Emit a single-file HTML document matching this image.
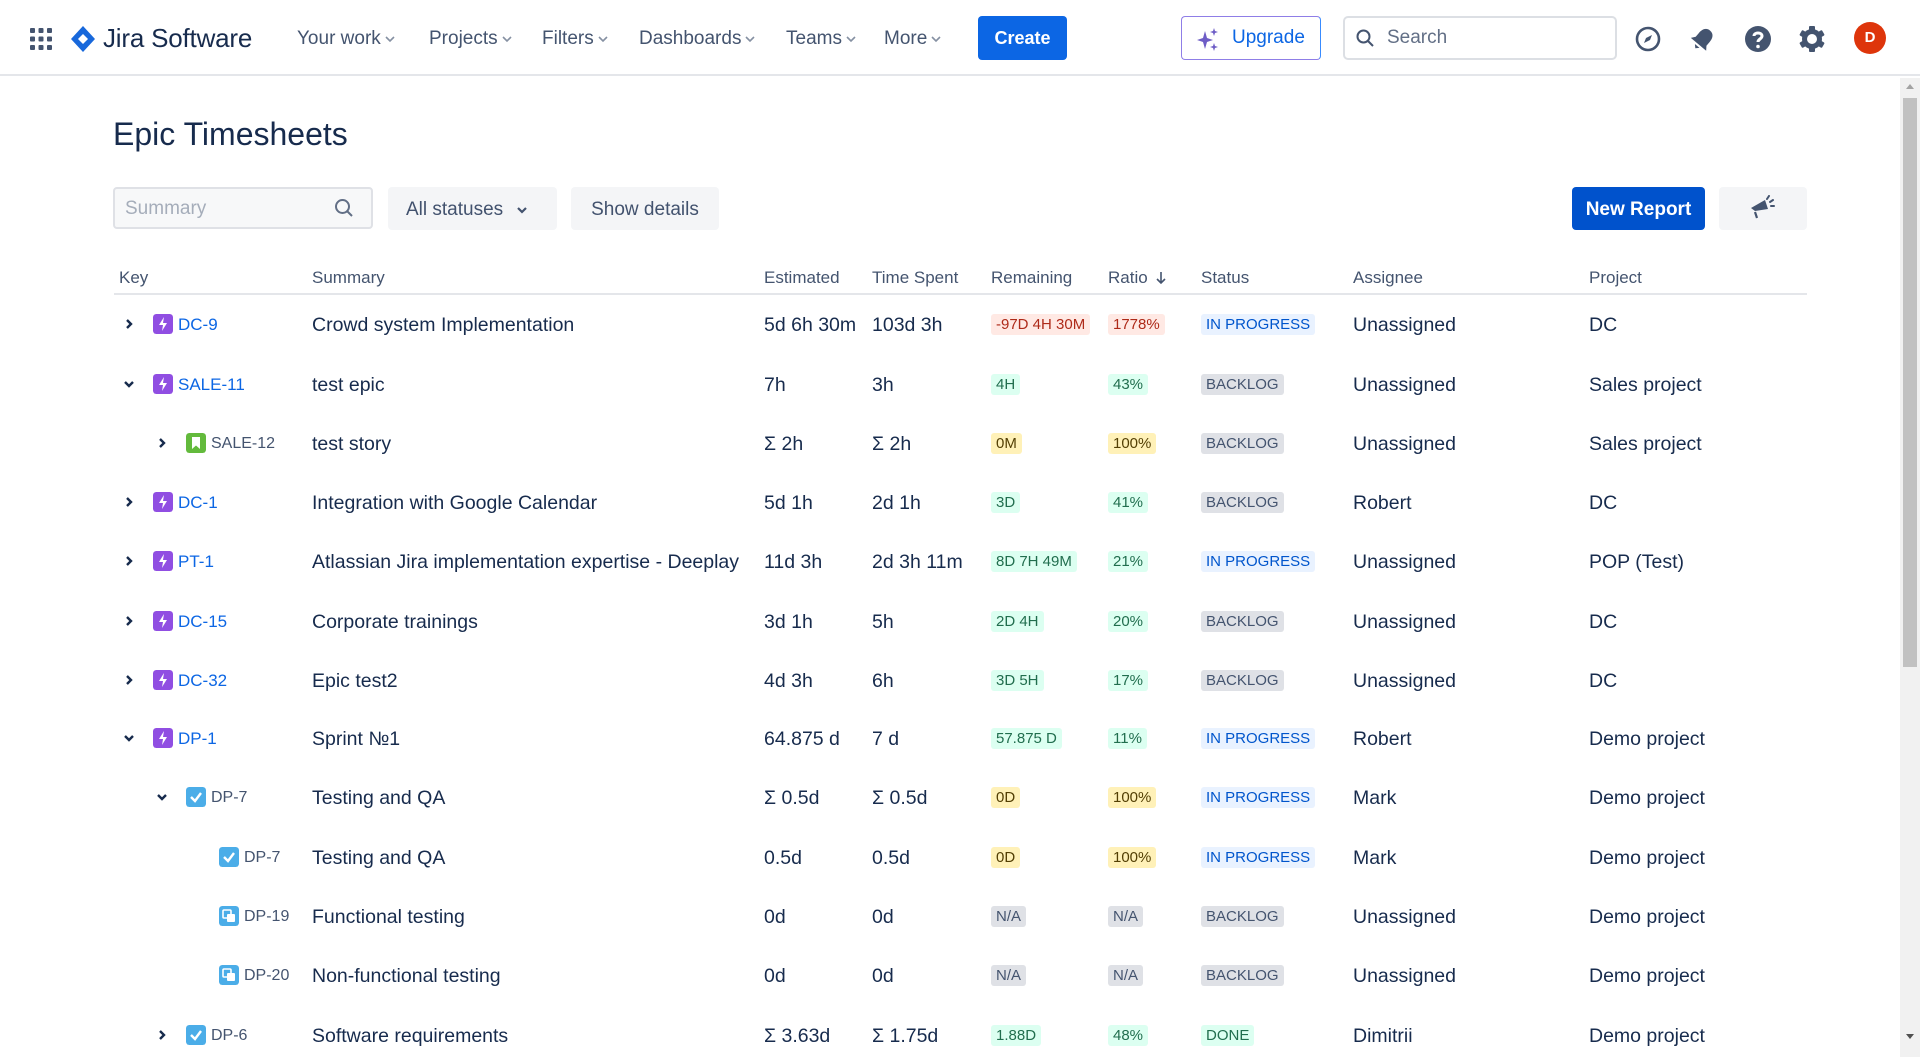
<!DOCTYPE html>
<html><head><meta charset="utf-8"><style>
*{box-sizing:border-box;margin:0;padding:0}
body{width:1920px;height:1057px;overflow:hidden;background:#fff;font-family:"Liberation Sans",Arial,sans-serif;color:#172b4d;position:relative}
.a{position:absolute}
.nav{position:absolute;left:0;top:0;width:1920px;height:76px;border-bottom:2px solid #e4e6ea}
.ni{position:absolute;top:27px;font-size:19px;color:#44546f;line-height:24px}
.ni svg{margin-left:4px;vertical-align:middle}
.row{position:absolute;left:0;width:1900px;height:40px;font-size:19.5px;line-height:40px;color:#172b4d}
.row>*{position:absolute;top:1px}
.ic{top:10px!important;width:20px;height:20px;border-radius:3px}
.k{font-size:17px}
.kd{font-size:16px;color:#44546f}
.b{display:inline-block;line-height:21px;height:21px;padding:0 5px;border-radius:3px;font-size:15px;vertical-align:middle;margin-top:-2px;font-style:normal}
.red{background:#ffe9e4;color:#ae2a19}.grn{background:#dcfff1;color:#216e4e}.yel{background:#fff1b8;color:#533f04}.gry{background:#dfe1e6;color:#44546f}.blu{background:#e9f2ff;color:#0055cc}
.th{position:absolute;top:268px;font-size:17px;color:#44546f}
</style></head><body>
<div class="nav">
<svg class="a" style="left:30px;top:28px" width="22" height="22" viewBox="0 0 22 22" fill="#44546f"><rect x="0" y="0" width="5" height="5" rx="1"/><rect x="8.5" y="0" width="5" height="5" rx="1"/><rect x="17" y="0" width="5" height="5" rx="1"/><rect x="0" y="8.5" width="5" height="5" rx="1"/><rect x="8.5" y="8.5" width="5" height="5" rx="1"/><rect x="17" y="8.5" width="5" height="5" rx="1"/><rect x="0" y="17" width="5" height="5" rx="1"/><rect x="8.5" y="17" width="5" height="5" rx="1"/><rect x="17" y="17" width="5" height="5" rx="1"/></svg>
<svg class="a" style="left:71px;top:26px" width="24" height="26" viewBox="0 0 24 26"><path d="M12 0 L24 13 L12 26 L0 13 Z" fill="#1868db"/><path d="M12 8 L17 13 L12 18 L7 13 Z" fill="#fff"/></svg>
<div class="a" style="left:103px;top:23px;font-size:26px;color:#172b4d;letter-spacing:-0.2px">Jira Software</div>
<div class="ni" style="left:297px">Your work<svg width="10" height="8" viewBox="0 0 10 8"><path d="M1 2 L5 6 L9 2" stroke="#8590a2" stroke-width="1.6" fill="none"/></svg></div>
<div class="ni" style="left:429px">Projects<svg width="10" height="8" viewBox="0 0 10 8"><path d="M1 2 L5 6 L9 2" stroke="#8590a2" stroke-width="1.6" fill="none"/></svg></div>
<div class="ni" style="left:542px">Filters<svg width="10" height="8" viewBox="0 0 10 8"><path d="M1 2 L5 6 L9 2" stroke="#8590a2" stroke-width="1.6" fill="none"/></svg></div>
<div class="ni" style="left:639px">Dashboards<svg width="10" height="8" viewBox="0 0 10 8"><path d="M1 2 L5 6 L9 2" stroke="#8590a2" stroke-width="1.6" fill="none"/></svg></div>
<div class="ni" style="left:786px">Teams<svg width="10" height="8" viewBox="0 0 10 8"><path d="M1 2 L5 6 L9 2" stroke="#8590a2" stroke-width="1.6" fill="none"/></svg></div>
<div class="ni" style="left:884px">More<svg width="10" height="8" viewBox="0 0 10 8"><path d="M1 2 L5 6 L9 2" stroke="#8590a2" stroke-width="1.6" fill="none"/></svg></div>
<div class="a" style="left:978px;top:16px;width:89px;height:44px;background:#0c66e4;border-radius:4px;color:#fff;font-size:18px;font-weight:bold;text-align:center;line-height:44px">Create</div>
<div class="a" style="left:1181px;top:16px;width:140px;height:44px;border:1.5px solid #8f7ee7;border-right-color:#388bff;border-radius:4px;color:#0c66e4;font-size:19px;line-height:41px;padding-left:50px">Upgrade</div>
<svg class="a" style="left:1197px;top:28px" width="22" height="24" viewBox="0 0 22 24" fill="#6e5dc6"><path d="M8 3 L10 10 L16 12 L10 14 L8 21 L6 14 L0 12 L6 10 Z"/><path d="M17 0 L18 3 L21 4 L18 5 L17 8 L16 5 L13 4 L16 3Z"/><path d="M17 15 L18 18 L21 19 L18 20 L17 23 L16 20 L13 19 L16 18Z"/></svg>
<div class="a" style="left:1343px;top:16px;width:274px;height:44px;border:2px solid #dcdfe4;border-radius:5px;color:#626f86;font-size:19px;line-height:40px;padding-left:42px">Search</div>
<svg class="a" style="left:1356px;top:29px" width="18" height="18" viewBox="0 0 18 18"><circle cx="7.5" cy="7.5" r="6" stroke="#44546f" stroke-width="2" fill="none"/><path d="M12 12 L17 17" stroke="#44546f" stroke-width="2"/></svg>
<svg class="a" style="left:1635px;top:26px" width="26" height="26" viewBox="0 0 26 26"><circle cx="13" cy="13" r="11" stroke="#44546f" stroke-width="2.6" fill="none"/><path d="M17 9 L11 12 L9 17 L15 14 Z" fill="#44546f"/></svg>
<svg class="a" style="left:1690px;top:25px" width="26" height="28" viewBox="0 0 26 28"><g transform="rotate(40 13 14)"><path d="M13 3 C18 3 20 7 20 12 L20 17 L23 21 L3 21 L6 17 L6 12 C6 7 8 3 13 3 Z" fill="#44546f"/><path d="M10 23 L16 23 L13 26 Z" fill="#44546f"/></g></svg>
<svg class="a" style="left:1744px;top:25px" width="28" height="28" viewBox="0 0 28 28"><circle cx="14" cy="14" r="13" fill="#44546f"/><path d="M10 11 C10 7 18 7 18 11 C18 14 14 14 14 17" stroke="#fff" stroke-width="3" fill="none"/><circle cx="14" cy="21.5" r="1.8" fill="#fff"/></svg>
<svg class="a" style="left:1798px;top:25px" width="28" height="28" viewBox="0 0 28 28"><g fill="#44546f"><rect x="11" y="1" width="6" height="26" rx="1"/><rect x="11" y="1" width="6" height="26" rx="1" transform="rotate(60 14 14)"/><rect x="11" y="1" width="6" height="26" rx="1" transform="rotate(120 14 14)"/><circle cx="14" cy="14" r="10"/></g><circle cx="14" cy="14" r="5" fill="#fff"/></svg>
<div class="a" style="left:1854px;top:22px;width:32px;height:32px;border-radius:50%;background:#de350b;color:#fff;font-size:15px;font-weight:bold;text-align:center;line-height:32px">D</div>
</div>
<div class="a" style="left:1900px;top:78px;width:20px;height:979px;background:#f1f1f1"></div>
<div class="a" style="left:1903px;top:98px;width:14px;height:569px;background:#c1c1c1"></div>
<div class="a" style="left:1906px;top:84px;width:0;height:0;border:4px solid transparent;border-bottom:5px solid #a3a3a3;border-top:0"></div>
<div class="a" style="left:1906px;top:1034px;width:0;height:0;border:4px solid transparent;border-top:5px solid #505050;border-bottom:0"></div>

<div class="a" style="left:113px;top:116px;font-size:32px;color:#172b4d">Epic Timesheets</div>
<div class="a" style="left:113px;top:187px;width:260px;height:42px;border:2px solid #dfe1e6;border-radius:4px;background:#f7f8f9;color:#a5adba;font-size:19px;line-height:40px;padding-left:10px">Summary</div>
<svg class="a" style="left:334px;top:198px" width="20" height="20" viewBox="0 0 20 20"><circle cx="8.5" cy="8.5" r="6.5" stroke="#626f86" stroke-width="2" fill="none"/><path d="M13 13 L18 18" stroke="#626f86" stroke-width="2"/></svg>
<div class="a" style="left:388px;top:187px;width:169px;height:43px;background:#f4f5f7;border-radius:4px;font-size:19px;color:#42526e;line-height:45px;padding-left:18px">All statuses <svg width="12" height="10" viewBox="0 0 12 10" style="margin-left:8px"><path d="M2 3 L6 7 L10 3" stroke="#42526e" stroke-width="2.2" fill="none"/></svg></div>
<div class="a" style="left:571px;top:187px;width:148px;height:43px;background:#f4f5f7;border-radius:4px;font-size:19px;color:#42526e;line-height:45px;text-align:center">Show details</div>
<div class="a" style="left:1572px;top:187px;width:133px;height:43px;background:#0052cc;border-radius:4px;font-size:19px;font-weight:bold;color:#fff;line-height:45px;text-align:center">New Report</div>
<div class="a" style="left:1719px;top:187px;width:88px;height:43px;background:#f4f5f7;border-radius:4px"></div>
<svg class="a" style="left:1749px;top:195px" width="28" height="26" viewBox="0 0 28 26"><path d="M2 13 L16 5 L19 14 L6 16 Z" fill="#44546f"/><path d="M6 17 L8 23" stroke="#44546f" stroke-width="2.2"/><path d="M18 4 L20 1 M21 7 L24 5 M22 11 L25 11" stroke="#44546f" stroke-width="2" stroke-linecap="round"/></svg>

<div class="th" style="left:119px">Key</div>
<div class="th" style="left:312px">Summary</div>
<div class="th" style="left:764px">Estimated</div>
<div class="th" style="left:872px">Time Spent</div>
<div class="th" style="left:991px">Remaining</div>
<div class="th" style="left:1108px">Ratio <svg width="12" height="14" viewBox="0 0 12 14" style="vertical-align:-2px;margin-left:3px"><path d="M6 1 L6 12 M2 8 L6 12 L10 8" stroke="#44546f" stroke-width="1.6" fill="none"/></svg></div>
<div class="th" style="left:1201px">Status</div>
<div class="th" style="left:1353px">Assignee</div>
<div class="th" style="left:1589px">Project</div>
<div class="a" style="left:114px;top:293px;width:1693px;height:2px;background:#e4e6ea"></div>

<svg width="0" height="0" style="position:absolute"><defs>
<g id="cr"><path d="M4 2 L8 6 L4 10" stroke="#172b4d" stroke-width="2.4" fill="none"/></g>
<g id="cd"><path d="M2 4 L6 8 L10 4" stroke="#172b4d" stroke-width="2.4" fill="none"/></g>
<g id="ep"><rect width="20" height="20" rx="3" fill="#904ee2"/><path d="M11 3 L6 11 L10 11 L9 17 L14 9 L10 9 Z" fill="#fff"/></g>
<g id="st"><rect width="20" height="20" rx="3" fill="#63ba3c"/><path d="M6 4 L14 4 L14 16 L10 12.5 L6 16 Z" fill="#fff"/></g>
<g id="tk"><rect width="20" height="20" rx="3" fill="#4bade8"/><path d="M5 10 L9 14 L15 6" stroke="#fff" stroke-width="2.4" fill="none"/></g>
<g id="sb"><rect width="20" height="20" rx="3" fill="#4bade8"/><rect x="4" y="4" width="8" height="8" rx="1" fill="none" stroke="#fff" stroke-width="1.6"/><rect x="8" y="8" width="8" height="8" rx="1" fill="#fff"/></g>
</defs></svg>

<div class="row" style="top:304px"><svg style="left:123px;top:14px" width="12" height="12"><use href="#cr"/></svg><svg class="ic" style="left:153px"><use href="#ep"/></svg><span class="k" style="left:178px;color:#0c66e4">DC-9</span><span style="left:312px">Crowd system Implementation</span><span style="left:764px">5d 6h 30m</span><span style="left:872px">103d 3h</span><span style="left:991px"><i class="b red">-97D 4H 30M</i></span><span style="left:1108px"><i class="b red">1778%</i></span><span style="left:1201px"><i class="b blu">IN PROGRESS</i></span><span style="left:1353px">Unassigned</span><span style="left:1589px">DC</span></div>

<div class="row" style="top:364px"><svg style="left:123px;top:14px" width="12" height="12"><use href="#cd"/></svg><svg class="ic" style="left:153px"><use href="#ep"/></svg><span class="k" style="left:178px;color:#0c66e4">SALE-11</span><span style="left:312px">test epic</span><span style="left:764px">7h</span><span style="left:872px">3h</span><span style="left:991px"><i class="b grn">4H</i></span><span style="left:1108px"><i class="b grn">43%</i></span><span style="left:1201px"><i class="b gry">BACKLOG</i></span><span style="left:1353px">Unassigned</span><span style="left:1589px">Sales project</span></div>

<div class="row" style="top:423px"><svg style="left:156px;top:14px" width="12" height="12"><use href="#cr"/></svg><svg class="ic" style="left:186px"><use href="#st"/></svg><span class="kd" style="left:211px">SALE-12</span><span style="left:312px">test story</span><span style="left:764px">Σ 2h</span><span style="left:872px">Σ 2h</span><span style="left:991px"><i class="b yel">0M</i></span><span style="left:1108px"><i class="b yel">100%</i></span><span style="left:1201px"><i class="b gry">BACKLOG</i></span><span style="left:1353px">Unassigned</span><span style="left:1589px">Sales project</span></div>

<div class="row" style="top:482px"><svg style="left:123px;top:14px" width="12" height="12"><use href="#cr"/></svg><svg class="ic" style="left:153px"><use href="#ep"/></svg><span class="k" style="left:178px;color:#0c66e4">DC-1</span><span style="left:312px">Integration with Google Calendar</span><span style="left:764px">5d 1h</span><span style="left:872px">2d 1h</span><span style="left:991px"><i class="b grn">3D</i></span><span style="left:1108px"><i class="b grn">41%</i></span><span style="left:1201px"><i class="b gry">BACKLOG</i></span><span style="left:1353px">Robert</span><span style="left:1589px">DC</span></div>

<div class="row" style="top:541px"><svg style="left:123px;top:14px" width="12" height="12"><use href="#cr"/></svg><svg class="ic" style="left:153px"><use href="#ep"/></svg><span class="k" style="left:178px;color:#0c66e4">PT-1</span><span style="left:312px">Atlassian Jira implementation expertise - Deeplay</span><span style="left:764px">11d 3h</span><span style="left:872px">2d 3h 11m</span><span style="left:991px"><i class="b grn">8D 7H 49M</i></span><span style="left:1108px"><i class="b grn">21%</i></span><span style="left:1201px"><i class="b blu">IN PROGRESS</i></span><span style="left:1353px">Unassigned</span><span style="left:1589px">POP (Test)</span></div>

<div class="row" style="top:601px"><svg style="left:123px;top:14px" width="12" height="12"><use href="#cr"/></svg><svg class="ic" style="left:153px"><use href="#ep"/></svg><span class="k" style="left:178px;color:#0c66e4">DC-15</span><span style="left:312px">Corporate trainings</span><span style="left:764px">3d 1h</span><span style="left:872px">5h</span><span style="left:991px"><i class="b grn">2D 4H</i></span><span style="left:1108px"><i class="b grn">20%</i></span><span style="left:1201px"><i class="b gry">BACKLOG</i></span><span style="left:1353px">Unassigned</span><span style="left:1589px">DC</span></div>

<div class="row" style="top:660px"><svg style="left:123px;top:14px" width="12" height="12"><use href="#cr"/></svg><svg class="ic" style="left:153px"><use href="#ep"/></svg><span class="k" style="left:178px;color:#0c66e4">DC-32</span><span style="left:312px">Epic test2</span><span style="left:764px">4d 3h</span><span style="left:872px">6h</span><span style="left:991px"><i class="b grn">3D 5H</i></span><span style="left:1108px"><i class="b grn">17%</i></span><span style="left:1201px"><i class="b gry">BACKLOG</i></span><span style="left:1353px">Unassigned</span><span style="left:1589px">DC</span></div>

<div class="row" style="top:718px"><svg style="left:123px;top:14px" width="12" height="12"><use href="#cd"/></svg><svg class="ic" style="left:153px"><use href="#ep"/></svg><span class="k" style="left:178px;color:#0c66e4">DP-1</span><span style="left:312px">Sprint №1</span><span style="left:764px">64.875 d</span><span style="left:872px">7 d</span><span style="left:991px"><i class="b grn">57.875 D</i></span><span style="left:1108px"><i class="b grn">11%</i></span><span style="left:1201px"><i class="b blu">IN PROGRESS</i></span><span style="left:1353px">Robert</span><span style="left:1589px">Demo project</span></div>

<div class="row" style="top:777px"><svg style="left:156px;top:14px" width="12" height="12"><use href="#cd"/></svg><svg class="ic" style="left:186px"><use href="#tk"/></svg><span class="kd" style="left:211px">DP-7</span><span style="left:312px">Testing and QA</span><span style="left:764px">Σ 0.5d</span><span style="left:872px">Σ 0.5d</span><span style="left:991px"><i class="b yel">0D</i></span><span style="left:1108px"><i class="b yel">100%</i></span><span style="left:1201px"><i class="b blu">IN PROGRESS</i></span><span style="left:1353px">Mark</span><span style="left:1589px">Demo project</span></div>

<div class="row" style="top:837px"><svg class="ic" style="left:219px"><use href="#tk"/></svg><span class="kd" style="left:244px">DP-7</span><span style="left:312px">Testing and QA</span><span style="left:764px">0.5d</span><span style="left:872px">0.5d</span><span style="left:991px"><i class="b yel">0D</i></span><span style="left:1108px"><i class="b yel">100%</i></span><span style="left:1201px"><i class="b blu">IN PROGRESS</i></span><span style="left:1353px">Mark</span><span style="left:1589px">Demo project</span></div>

<div class="row" style="top:896px"><svg class="ic" style="left:219px"><use href="#sb"/></svg><span class="kd" style="left:244px">DP-19</span><span style="left:312px">Functional testing</span><span style="left:764px">0d</span><span style="left:872px">0d</span><span style="left:991px"><i class="b gry">N/A</i></span><span style="left:1108px"><i class="b gry">N/A</i></span><span style="left:1201px"><i class="b gry">BACKLOG</i></span><span style="left:1353px">Unassigned</span><span style="left:1589px">Demo project</span></div>

<div class="row" style="top:955px"><svg class="ic" style="left:219px"><use href="#sb"/></svg><span class="kd" style="left:244px">DP-20</span><span style="left:312px">Non-functional testing</span><span style="left:764px">0d</span><span style="left:872px">0d</span><span style="left:991px"><i class="b gry">N/A</i></span><span style="left:1108px"><i class="b gry">N/A</i></span><span style="left:1201px"><i class="b gry">BACKLOG</i></span><span style="left:1353px">Unassigned</span><span style="left:1589px">Demo project</span></div>

<div class="row" style="top:1015px"><svg style="left:156px;top:14px" width="12" height="12"><use href="#cr"/></svg><svg class="ic" style="left:186px"><use href="#tk"/></svg><span class="kd" style="left:211px">DP-6</span><span style="left:312px">Software requirements</span><span style="left:764px">Σ 3.63d</span><span style="left:872px">Σ 1.75d</span><span style="left:991px"><i class="b grn">1.88D</i></span><span style="left:1108px"><i class="b grn">48%</i></span><span style="left:1201px"><i class="b grn">DONE</i></span><span style="left:1353px">Dimitrii</span><span style="left:1589px">Demo project</span></div>
</body></html>
